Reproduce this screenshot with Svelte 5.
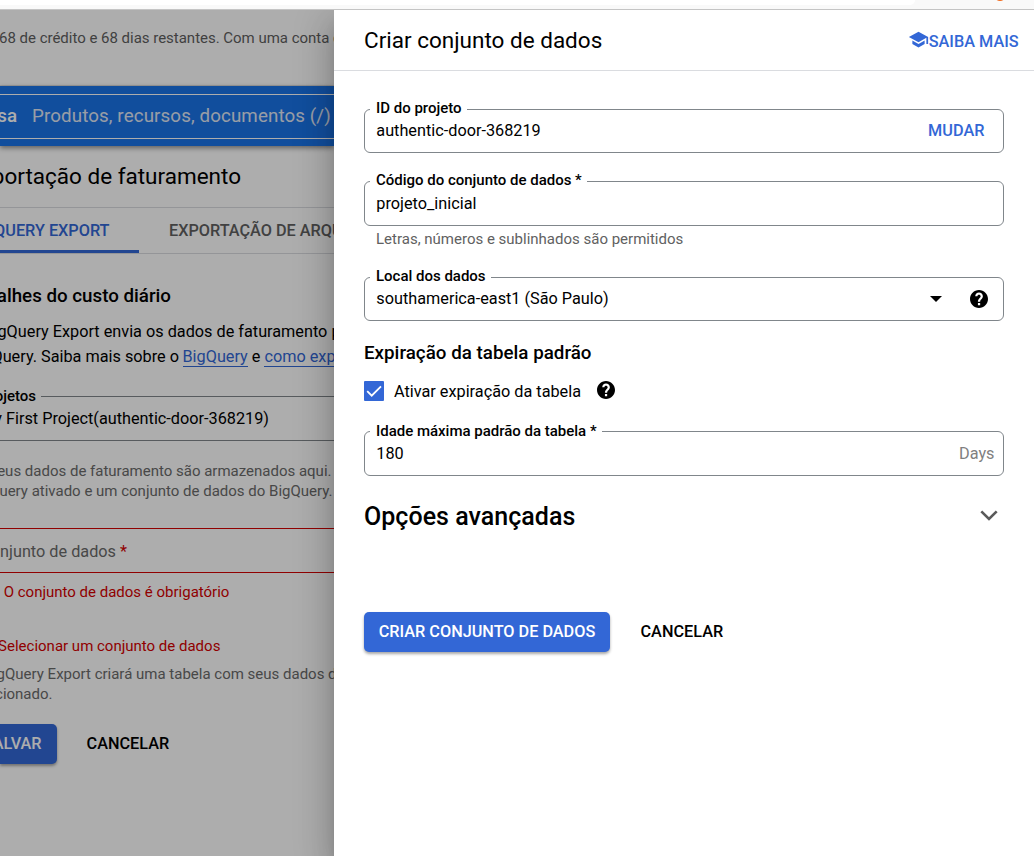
<script>
  let tableExpiration = $state(true);
  const projectId = 'authentic-door-368219';
</script>

{#snippet help()}
  <svg class="help" viewBox="2 2 20 20" aria-hidden="true">
    <path d="M12 2C6.48 2 2 6.48 2 12s4.48 10 10 10 10-4.48 10-10S17.52 2 12 2zm1.3 17h-2.5v-2.5h2.5V19zm2.3-7.75-.9.92c-.92.83-1.4 1.43-1.4 2.93h-2.5v-.5c0-1.2.48-2.2 1.21-2.93l1.24-1.26c.37-.36.59-.86.59-1.41 0-1.1-.8-1.8-1.84-1.8S10.15 7.9 10.15 9H7.8c0-2.3 1.85-4.2 4.2-4.2s4.3 1.9 4.3 4.2c0 .88-.3 1.68-.7 2.25z" />
  </svg>
{/snippet}

<div class="screen">
  <div class="chrome"><div class="address"></div><span class="dot"></span></div>
  <div class="stage">
    <main class="page">
      <div class="banner">68 de crédito e 68 dias restantes. Com uma conta de</div>
      <div class="topbar">
        <div class="search"><b>sa</b><span>Produtos, recursos, documentos (/)</span></div>
      </div>
      <h1 class="title"><span>portação de faturamento</span></h1>
      <nav class="tabs">
        <div class="tab active"><span>QUERY EXPORT</span></div>
        <div class="tab">EXPORTAÇÃO DE ARQUIVO</div>
      </nav>
      <h2 class="section"><span>alhes do custo diário</span></h2>
      <p class="copy first">gQuery Export envia os dados de faturamento para</p>
      <p class="copy second"><span class="lead">Query. Saiba mais sobre o</span> <a href="#bq">BigQuery</a> e <a href="#export">como exportar</a></p>
      <div class="project">
        <div class="project-label"><span>ojetos</span></div>
        <div class="project-value"><span>y First Project(authentic-door-368219)</span></div>
      </div>
      <p class="muted note"><span>eus dados de faturamento são armazenados aqui.</span><span class="n2">uery ativado e um conjunto de dados do BigQuery.</span></p>
      <div class="dataset"><span>njunto de dados <i>*</i></span></div>
      <p class="error required">O conjunto de dados é obrigatório</p>
      <p class="error choose"><span>Selecionar um conjunto de dados</span></p>
      <p class="muted result">gQuery Export criará uma tabela com seus dados de</p>
      <p class="muted result-end"><span>cionado.</span></p>
      <div class="page-actions">
        <button class="primary save"><span>ALVAR</span></button>
        <button class="plain">CANCELAR</button>
      </div>
    </main>
    <div class="scrim"></div>

    <aside class="panel">
      <header>
        <h2>Criar conjunto de dados</h2>
        <a class="learn" href="#learn">
          <svg viewBox="0 0 24 24" aria-hidden="true"><path d="M5 13.18v4L12 21l7-3.82v-4L12 17l-7-3.82zM12 3 1 9l11 6 9-4.91V17h2V9L12 3z" /></svg>
          <span>SAIBA MAIS</span>
        </a>
      </header>
      <form onsubmit={(e) => e.preventDefault()}>
        <div class="field">
          <span class="label">ID do projeto</span>
          <div class="value"><span>{projectId}</span><a class="change" href="#change">MUDAR</a></div>
        </div>
        <div class="field code">
          <span class="label">Código do conjunto de dados *</span>
          <div class="value"><span>projeto_inicial</span></div>
        </div>
        <div class="hint">Letras, números e sublinhados são permitidos</div>
        <div class="field">
          <span class="label">Local dos dados</span>
          <div class="value">
            <span>southamerica-east1 (São Paulo)</span>
            <svg class="caret" viewBox="0 0 12 6" aria-hidden="true"><path d="M0 0h12L6 6z" /></svg>
            {@render help()}
          </div>
        </div>
        <h3>Expiração da tabela padrão</h3>
        <div class="check">
          <button class="box" type="button" role="checkbox" aria-checked={tableExpiration} aria-label="Ativar expiração da tabela" onclick={() => (tableExpiration = !tableExpiration)}>
            {#if tableExpiration}
              <svg viewBox="0 0 20 20" aria-hidden="true"><path d="M3.2 10.2 7.7 14.7 17 5.3" /></svg>
            {/if}
          </button>
          <span class="check-text">Ativar expiração da tabela</span>
          {@render help()}
        </div>
        <div class="field age">
          <span class="label">Idade máxima padrão da tabela *</span>
          <div class="value"><span>180</span><span class="unit">Days</span></div>
        </div>
        <div class="advanced">
          <h2>Opções avançadas</h2>
          <svg viewBox="0 0 18 11" aria-hidden="true"><path d="M1.3 1.3 9 9l7.7-7.7" /></svg>
        </div>
        <div class="actions">
          <button class="primary create">CRIAR CONJUNTO DE DADOS</button>
          <button class="plain" type="button">CANCELAR</button>
        </div>
      </form>
    </aside>
  </div>
</div>

<style>
  :global(body) { margin: 0; }
  h1, h2, h3, p { margin: 0; font-weight: 400; }
  a { color: #3367d6; text-decoration: none; }
  button { border: 0; padding: 0; background: none; color: inherit; font: 500 16.25px/40px Roboto, sans-serif; white-space: nowrap; }
  .screen { width: 1034px; height: 856px; overflow: hidden; background: #fff; color: #000; font: 16.25px/20px Roboto, sans-serif; }
  .chrome { box-sizing: border-box; height: 10px; display: flex; background: #f9f9f9; border-bottom: 1px solid #c4c4c4; overflow: hidden; }
  .address { width: 915px; height: 5px; background: #fff; border-radius: 0 0 14px 0; }
  .dot { width: 12px; height: 12px; margin: -11px 0 0 79px; border-radius: 50%; background: #f26b1d; }
  .stage { display: grid; grid-template-columns: 334px 700px; height: 846px; overflow: hidden; }
  .page { grid-area: 1 / 1; height: 846px; overflow: hidden; white-space: nowrap; background: #fff; }
  .scrim { grid-area: 1 / 1; z-index: 1; background: rgba(0, 0, 0, .32); }
  .title, .section, .project-value, .choose, .result-end { display: flex; justify-content: flex-end; }
  .banner { height: 75px; line-height: 56px; font-size: 15px; letter-spacing: -.015px; color: #5f5f5f; margin-left: -1px; border-bottom: 1px solid #e4e4e4; }
  .topbar { height: 60px; box-sizing: border-box; padding: 8px 0 7px; background: #1a73e8; box-shadow: 0 2px 5px rgba(0, 0, 0, .45); }
  .search { display: flex; gap: 15px; height: 43px; border: solid #fff; border-width: 1px 0; line-height: 42px; font-size: 18.75px; color: #e0e8f5; }
  .search span { letter-spacing: .11px; }
  .search b { width: 17px; display: flex; justify-content: flex-end; font-weight: 500; color: #fff; }
  .title { width: 241px; height: 61px; line-height: 61px; font-size: 22.5px; }
  .tabs { box-sizing: border-box; display: flex; height: 47px; border: solid #dadce0; border-width: 1px 0; font-weight: 500; line-height: 45px; color: #616161; }
  .tab.active { box-sizing: border-box; width: 139px; height: 45px; margin-right: 30px; padding-right: 29.5px; display: flex; justify-content: flex-end; border-bottom: 3px solid #3367d6; color: #3367d6; }
  .section { width: 171px; height: 24px; margin-top: 30px; line-height: 24px; font-size: 18.75px; }
  .section span { font-weight: 500; }
  .copy.first { height: 25px; line-height: 25px; margin: 11px 0 0 -2.5px; }
  .copy.second { height: 25px; line-height: 25px; display: flex; gap: 4px; }
  .copy .lead { width: 179px; margin-right: -.5px; display: flex; justify-content: flex-end; }
  .copy a { height: 22px; border-bottom: 1px solid #3367d6; }
  .project { height: 53px; margin-top: 18px; border-bottom: 1px solid #80868b; }
  .project-label { display: flex; height: 18px; line-height: 18px; font-size: 15px; font-weight: 500; align-items: center; }
  .project-label span { width: 36px; display: flex; justify-content: flex-end; }
  .project-label::after { content: ''; flex: 1; height: 1px; margin-left: 5px; background: #80868b; }
  .project-value { width: 269px; height: 27px; line-height: 27px; }
  .muted { font-size: 15px; color: #6b6b6b; }
  .note { display: flex; flex-direction: column; align-items: flex-end; width: 331.5px; height: 40px; margin-top: 20px; }
  .n2 { margin-right: -1px; }
  .dataset { height: 43px; margin-top: 27px; border: solid #d50000; border-width: 1px 0; line-height: 45px; color: #6b6b6b; }
  .dataset span { width: 127px; display: flex; justify-content: flex-end; white-space: pre; }
  .dataset i { color: #d50000; font-style: normal; }
  .error { font-size: 15px; color: #d50000; }
  .required { margin: 9px 0 0 3.7px; }
  .choose { width: 220.4px; margin-top: 34px; }
  .result { margin: 8px 0 0 -3.4px; }
  .result-end { width: 52.5px; }
  .page-actions { display: flex; gap: 29.6px; margin-top: 20px; height: 40px; }
  .primary { background: #3367d6; color: #fff; border-radius: 5px; box-shadow: 0 2px 3px rgba(0, 0, 0, .35); }
  .save { box-sizing: border-box; width: 57px; height: 40px; border-radius: 0 5px 5px 0; display: flex; justify-content: flex-end; padding-right: 15.4px; }
  .panel { grid-area: 1 / 2; z-index: 2; background: #fff; box-shadow: 0 10px 13px -6px rgba(0, 0, 0, .2), 0 20px 30px 3px rgba(0, 0, 0, .14), 0 8px 38px 6px rgba(0, 0, 0, .12); }
  header { box-sizing: border-box; height: 61px; padding: 0 15px 0 30px; display: flex; align-items: center; justify-content: space-between; border-bottom: 1px solid #dadce0; }
  header h2 { font-size: 22.5px; line-height: 60px; }
  .learn { display: flex; align-items: center; font-weight: 500; padding-top: 3px; }
  .learn svg { width: 21px; height: 21px; margin: -4px .2px 0 0; fill: #3367d6; }
  .learn span { margin-right: .4px; }
  form { padding: 38px 30px 0; }
  .field { box-sizing: border-box; height: 44px; border: 1px solid #80868b; border-radius: 6px; }
  .label { display: block; width: max-content; height: 18px; margin: -11px 0 0 5px; padding: 0 5px 0 6px; background: #fff; font-size: 15px; line-height: 18px; font-weight: 500; letter-spacing: -.01px; }
  .value { display: flex; align-items: center; height: 27px; padding: 0 9px 0 11.3px; }
  .change { margin-left: auto; margin-right: 9.6px; font-weight: 500; }
  .code { height: 45px; margin-top: 28px; }
  .code .value { height: 29px; }
  .hint { height: 26px; margin: 0 0 25px 12px; line-height: 26px; font-size: 15px; color: #616161; }
  .caret { width: 12px; height: 6px; margin-left: auto; margin-right: 28px; }
  .help { width: 18px; height: 18px; display: block; fill: #000; }
  .value .help { margin-right: 6px; }
  form h3 { height: 24px; margin-top: 20px; font-size: 18.75px; line-height: 24px; font-weight: 500; letter-spacing: .02px; }
  .check { display: flex; align-items: center; height: 20px; margin-top: 16px; }
  .box { width: 20px; height: 20px; background: #3367d6; border-radius: 1px; }
  .box svg { display: block; width: 20px; height: 20px; fill: none; stroke: #fff; stroke-width: 1.8; }
  .check-text { margin: 1px 16px 0 10px; }
  .check .help { margin-top: -2px; }
  .age { height: 45px; margin-top: 30px; }
  .age .label { margin-top: -10px; }
  .unit { margin-left: auto; margin-right: -.5px; color: #808080; }
  .advanced { display: flex; align-items: center; justify-content: space-between; height: 40px; margin-top: 20px; padding-right: 6px; }
  .advanced h2 { font-size: 25px; line-height: 30px; font-weight: 500; padding-top: 1px; letter-spacing: .03px; }
  .advanced svg { width: 18px; height: 11px; margin-top: -1px; fill: none; stroke: #5a5a5a; stroke-width: 2.6; }
  .actions { display: flex; gap: 30.5px; margin-top: 76px; }
  .create { width: 246px; height: 40px; }
</style>
